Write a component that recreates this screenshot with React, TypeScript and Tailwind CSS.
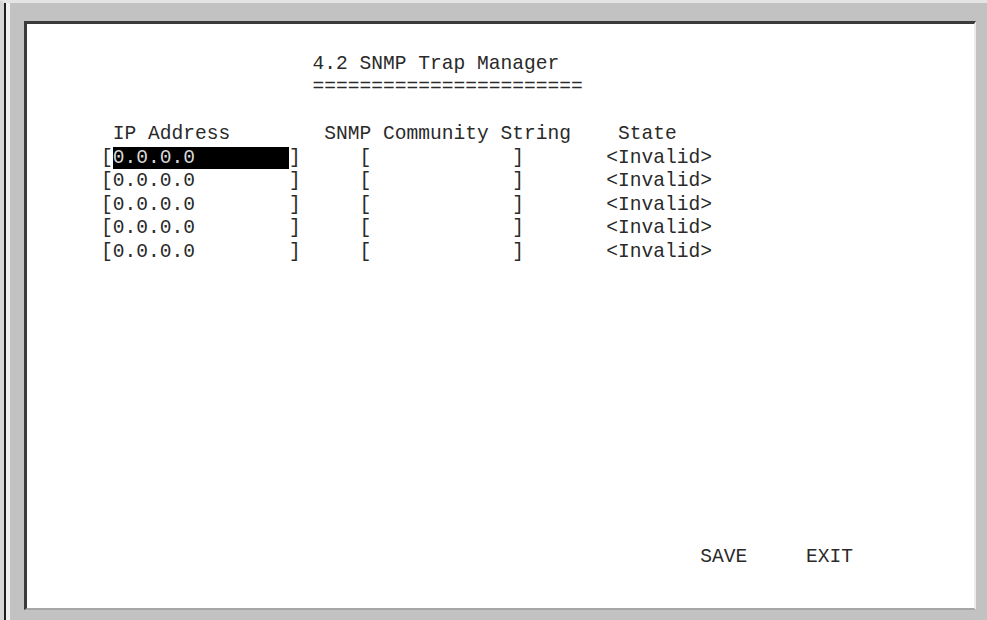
const pad = (s: string, n: number) => s + " ".repeat(Math.max(0, n - s.length));

type TrapRow = { ip: string; community: string; state: string };

const rows: TrapRow[] = [
  { ip: "0.0.0.0", community: "", state: "<Invalid>" },
  { ip: "0.0.0.0", community: "", state: "<Invalid>" },
  { ip: "0.0.0.0", community: "", state: "<Invalid>" },
  { ip: "0.0.0.0", community: "", state: "<Invalid>" },
  { ip: "0.0.0.0", community: "", state: "<Invalid>" },
];

function Line({ children }: { children?: React.ReactNode }) {
  return <div className="h-[23.48px] leading-[23.48px] whitespace-pre">{children}</div>;
}

export default function App() {
  return (
    <div className="w-[987px] h-[620px] overflow-hidden bg-[#c2c2c2] border-t-[3px] border-t-[#e4e4e4] border-l-4 border-l-[#d6d6d6] flex">
      <div className="flex-1 flex border-l-2 border-l-[#1f1f1f]">
        <div className="flex-1 flex border-l-4 border-l-[#f0f0f0] pl-[14px] pt-[18px] pr-[11px] pb-[10px]">
          {/* terminal panel */}
          <div className="flex-1 bg-white border-t-[3px] border-l-[3px] border-t-[#3a3a3a] border-l-[#3a3a3a] border-r-2 border-b-2 border-r-[#ececec] border-b-[#a6a6a6] pl-[74px] pt-[29px] font-['Liberation_Mono','Courier_New',monospace] text-[19.58px] text-[#2a2a2a]">
            <Line>{" ".repeat(18)}4.2 SNMP Trap Manager</Line>
            <Line>{" ".repeat(18) + "=".repeat(23)}</Line>
            <Line />
            <Line>{pad(" IP Address", 19) + pad("SNMP Community String", 25) + "State"}</Line>
            {rows.map((r, i) => (
              <Line key={i}>
                [
                {i === 0 ? (
                  <span className="bg-black text-[#d8d8d8]">{pad(r.ip, 15)}</span>
                ) : (
                  pad(r.ip, 15)
                )}
                {"]" + " ".repeat(5) + "[" + pad(r.community, 12) + "]" + " ".repeat(7) + r.state}
              </Line>
            ))}
            {Array.from({ length: 12 }).map((_, i) => (
              <Line key={"gap" + i} />
            ))}
            <Line>{" ".repeat(51)}SAVE{" ".repeat(5)}EXIT</Line>
          </div>
        </div>
      </div>
    </div>
  );
}
